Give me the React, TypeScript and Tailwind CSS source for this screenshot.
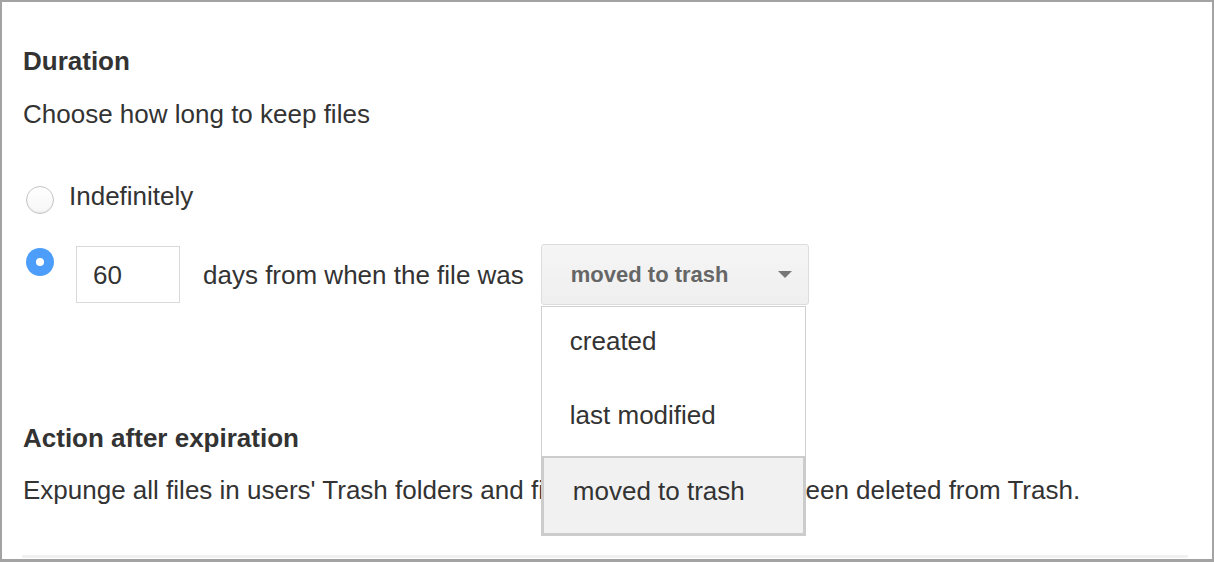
function Radio({ checked }: { checked?: boolean }) {
  if (checked) {
    return (
      <div className="flex h-[28px] w-[28px] shrink-0 items-center justify-center rounded-full bg-[#4d9dfa]">
        <div className="h-[8px] w-[8px] rounded-full bg-white" />
      </div>
    );
  }
  return (
    <div className="h-[28px] w-[28px] shrink-0 rounded-full border border-[#c4c4c4] bg-gradient-to-b from-white to-[#f6f6f6] shadow-[inset_0_-1px_1px_rgba(0,0,0,0.06)]" />
  );
}

function Dropdown() {
  return (
    <div className="relative ml-[17px]">
      <div className="flex h-[61px] w-[268px] items-center justify-between rounded-[3px] border border-[#dcdcdc] bg-gradient-to-b from-[#f5f5f5] to-[#efefef] pl-[29px] pr-[16px]">
        <span className="text-[22px] font-bold text-[#666]">moved to trash</span>
        <span className="h-0 w-0 border-x-[7px] border-t-[7px] border-x-transparent border-t-[#777]" />
      </div>
      <div className="absolute left-0 top-[62px] z-10 w-[265px] border border-[#cfcfcf] bg-white text-[26px] leading-[30px] text-[#333]">
        <div className="h-[74px] pl-[28px] pt-[19px]">created</div>
        <div className="h-[75px] pl-[28px] pt-[19px]">last modified</div>
        <div className="-mx-px -mb-px h-[80px] border-x-[3px] border-b-[3px] border-t-2 border-[#cccccc] bg-[#f1f1f1] pl-[29px] pt-[18px]">
          moved to trash
        </div>
      </div>
    </div>
  );
}

export default function App() {
  return (
    <div
      className="h-[562px] w-[1214px] overflow-hidden border-x-2 border-t-2 border-b-[3px] border-[#a3a3a3] bg-white text-[26px] leading-[30px] text-[#333]"
      style={{ fontFamily: '"Liberation Sans", Arial, sans-serif' }}
    >
      <div className="pl-[21px] pr-[24px]">
        <div className="mt-[44px] font-bold">Duration</div>
        <div className="mt-[23px]">Choose how long to keep files</div>

        <div className="mt-[52px] flex h-[30px] items-start">
          <div className="ml-[3px] mt-[5px]">
            <Radio />
          </div>
          <div className="ml-[15px]">Indefinitely</div>
        </div>

        <div className="mt-[33px] flex h-[61px] items-start">
          <div className="ml-[3px] mt-[4px]">
            <Radio checked />
          </div>
          <div className="ml-[22px] mt-[2px] flex h-[57px] w-[104px] items-center border border-[#d9d9d9] pl-[16px]">
            60
          </div>
          <div className="ml-[23px] mt-[16px]">days from when the file was</div>
          <Dropdown />
        </div>

        <div className="mt-[118px] font-bold">Action after expiration</div>
        <div className="mt-[22px]">
          Expunge all files in users' Trash folders and files that have already been deleted from Trash.
        </div>
        <div className="-ml-px mt-[50px] h-[3px] w-[1166px] bg-[#f1f1f1]" />
      </div>
    </div>
  );
}
